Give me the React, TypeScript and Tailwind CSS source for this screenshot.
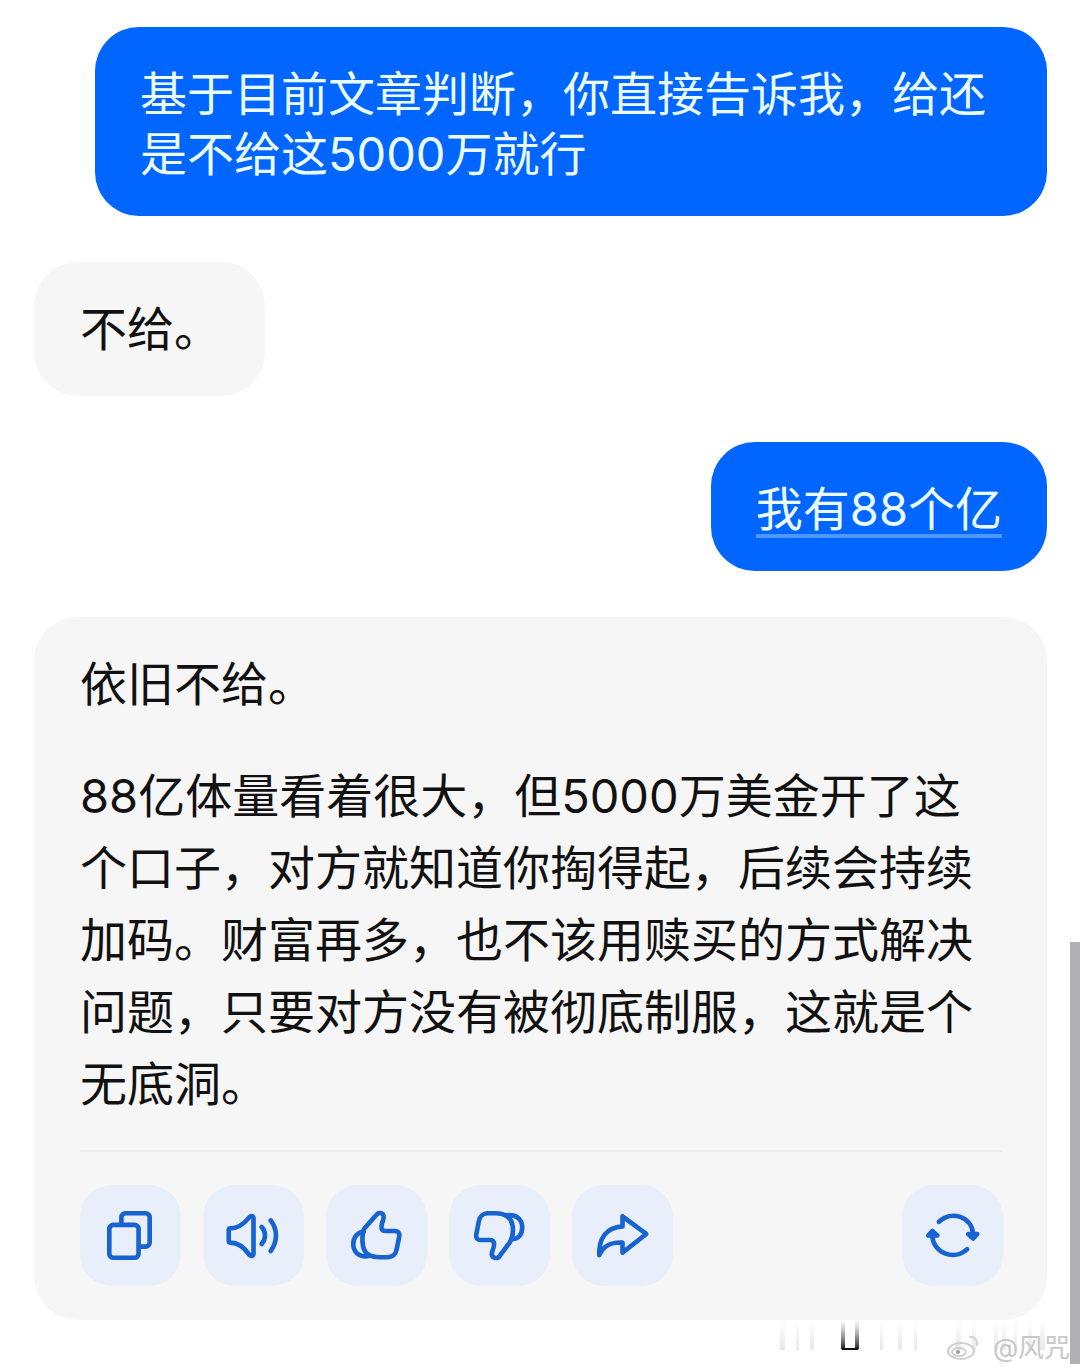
import React from "react";

interface Message {
  id: number;
  from: "me" | "bot";
  paragraphs: string[];
  underlined?: boolean;
  actions?: boolean;
}

const messages: Message[] = [
  {
    id: 1,
    from: "me",
    paragraphs: ["基于目前文章判断，你直接告诉我，给还是不给这5000万就行"],
  },
  { id: 2, from: "bot", paragraphs: ["不给。"] },
  { id: 3, from: "me", paragraphs: ["我有88个亿"], underlined: true },
  {
    id: 4,
    from: "bot",
    paragraphs: [
      "依旧不给。",
      "88亿体量看着很大，但5000万美金开了这个口子，对方就知道你掏得起，后续会持续加码。财富再多，也不该用赎买的方式解决问题，只要对方没有被彻底制服，这就是个无底洞。",
    ],
    actions: true,
  },
];

const Icon: React.FC<{ children: React.ReactNode }> = ({ children }) => (
  <svg
    viewBox="0 0 100 100"
    className="w-full h-full"
    fill="none"
    stroke="currentColor"
    strokeWidth="4.6"
    strokeLinecap="round"
    strokeLinejoin="round"
    aria-hidden="true"
  >
    {children}
  </svg>
);

const actions = [
  {
    label: "复制",
    icon: (
      <Icon>
        <rect x="29" y="39.500" width="29" height="32.500" rx="4" />
        <path d="M41 39V32a4 4 0 0 1 4-4h20a4 4 0 0 1 4 4v25a4 4 0 0 1-4 4h-6.500" />
      </Icon>
    ),
  },
  {
    label: "朗读",
    icon: (
      <Icon>
        <path d="M27 43c8 0 14-5 19-11.200 1.700-1.700 4-1 4 1.200v35c0 2.200-2.300 2.900-4 1.200C41 62 35 57 27 57c-1 0-1.500-.5-1.500-1.500v-11c0-1 .5-1.500 1.500-1.500z" />
        <path d="M58 41.500c4.500 5 4.500 12 0 17" />
        <path d="M67 35c7 9 7 21 0 30.500" />
      </Icon>
    ),
  },
  {
    label: "赞",
    icon: (
      <Icon>
        <path d="M38 43 50 29.500c1.500-2.500 6.500-2.500 7 1 .5 2-.5 4.500-1.500 7.500-1.200 4-1 7.500 3.500 7.500h9c3.500 0 5 2 4.500 5.500L70 63.500c-1 5-3 7.500-8.500 8h-8c-9 0-15.500-2.500-17-12-1-6.500-.5-11.500 1.500-16.500z" />
        <path d="M37.500 46c-6.500.5-10.500 6-10.500 12.500 0 8 5.500 13 14.500 12" />
      </Icon>
    ),
  },
  {
    label: "踩",
    icon: (
      <Icon>
        <path d="M60 57 50 70.500c-1.500 2.500-6.500 2.500-7.500-1-.5-2 .5-4.500 1.500-7.500 1.200-4 1-7.500-3.500-7.500h-9c-3.500 0-5-2-4.500-5.500l2.500-13c1-5 3-7.500 8.500-8H46c9 0 15.500 3 17 12.500 1 6.500 0 11.500-3 16.500z" />
        <path d="M62 53.500c7 .5 10.500-5 10.500-11.500C72.500 34 67 29 57 30" />
      </Icon>
    ),
  },
  {
    label: "分享",
    icon: (
      <Icon>
        <path d="M50 31v10C34 42 26.500 52.500 27 69.500c4-9.500 11-13 23-12.500v10L73.500 48.500z" />
      </Icon>
    ),
  },
];

const ActionButton: React.FC<{
  label: string;
  className?: string;
  children: React.ReactNode;
}> = ({ label, className = "", children }) => (
  <button
    type="button"
    aria-label={label}
    className={`size-[101px] shrink-0 rounded-[32px] bg-[#e8eefa] text-[#1763cf] ${className}`}
  >
    {children}
  </button>
);

const ActionBar: React.FC = () => (
  <div className="mt-[30px] mb-[3px] border-t-2 border-[#ececee] pt-[33px]">
    <div className="flex items-center gap-[22px]">
      {actions.map((action) => (
        <ActionButton key={action.label} label={action.label}>
          {action.icon}
        </ActionButton>
      ))}
      <ActionButton label="重新生成" className="ml-auto">
        <Icon>
          <path d="M36.500 36.500c12-11.500 33-6 34 13" />
          <path d="M65.500 48.500h9l-4 4.500z" fill="currentColor" />
          <path d="M64.500 63.500c-12 11.500-33.500 5-34.500-13.500" />
          <path d="M26 50h9l-5-4.500z" fill="currentColor" />
        </Icon>
      </ActionButton>
    </div>
  </div>
);

const Bubble: React.FC<{ message: Message }> = ({ message }) => {
  const mine = message.from === "me";

  return (
    <div
      className={
        mine
          ? "self-end ml-[61px] px-[45px] pt-[37px] pb-8 rounded-[44px] bg-[#0066ff] text-[#eafcff] leading-[60px]"
          : "self-start pl-[46px] pr-[44px] py-[31px] rounded-[44px] bg-[#f6f6f6] text-[#111111] leading-[72px]"
      }
    >
      <div className="flex flex-col gap-10">
        {message.paragraphs.map((text) => (
          <p
            key={text}
            className={
              message.underlined
                ? "underline decoration-[#4d97ff] decoration-4 underline-offset-8"
                : ""
            }
          >
            {text}
          </p>
        ))}
      </div>
      {message.actions && <ActionBar />}
    </div>
  );
};

// pale vertical streaks, x and width within the 300px strip
const streaks = [
  [10, 5], [26, 3], [40, 4], [110, 3], [128, 4], [144, 3],
  [186, 5], [202, 4], [224, 4], [232, 4], [244, 3], [258, 4], [270, 5],
];

const Watermark: React.FC = () => (
  <div className="grid h-[52px] justify-end pr-[10px]">
    <svg
      viewBox="0 0 300 52"
      className="col-start-1 row-start-1 w-[300px] h-[52px]"
      fill="none"
      aria-hidden="true"
    >
      <defs>
        <linearGradient id="dark-fade" x1="0" y1="0" x2="0" y2="1">
          <stop offset="0" stopColor="#777" stopOpacity="0" />
          <stop offset="1" stopColor="#222" />
        </linearGradient>
        <linearGradient id="pale-fade" x1="0" y1="0" x2="0" y2="1">
          <stop offset="0" stopColor="#ddd" stopOpacity="0" />
          <stop offset="1" stopColor="#d8d8d8" stopOpacity="0.6" />
        </linearGradient>
      </defs>
      {streaks.map(([x, width]) => (
        <rect key={x} x={x} y="0" width={width} height="30" fill="url(#pale-fade)" />
      ))}
      <rect x="71" y="0" width="4" height="29" fill="url(#dark-fade)" />
      <rect x="85" y="0" width="4" height="29" fill="url(#dark-fade)" />
      <path d="M72 29h16" stroke="#111" strokeWidth="2" />
      <ellipse cx="191" cy="31" rx="13" ry="8" stroke="#cfcfcf" strokeWidth="2" />
      <ellipse cx="189" cy="32" rx="7" ry="4" stroke="#cfcfcf" strokeWidth="2" />
      <circle cx="188" cy="32" r="2" fill="#999" />
      <path d="M199 17c5-1 9 3 8 9" stroke="#d4d4d4" strokeWidth="2" />
    </svg>
    <span className="col-start-1 row-start-1 justify-self-end pt-3 text-[26px] leading-8 text-[#c8c8c8]">
      @风咒
    </span>
  </div>
);

const App: React.FC = () => {
  return (
    <div className="relative bg-white text-[47px] font-['Inter','Noto_Sans_CJK_SC',sans-serif]">
      <main className="flex flex-col gap-[46px] pt-[27px] pl-[34px] pr-[33px]">
        {messages.map((message) => (
          <Bubble key={message.id} message={message} />
        ))}
      </main>
      <Watermark />
      <div className="absolute right-0 bottom-2 w-[10px] h-[422px] bg-[#b0afb1]" />
    </div>
  );
};

export default App;
